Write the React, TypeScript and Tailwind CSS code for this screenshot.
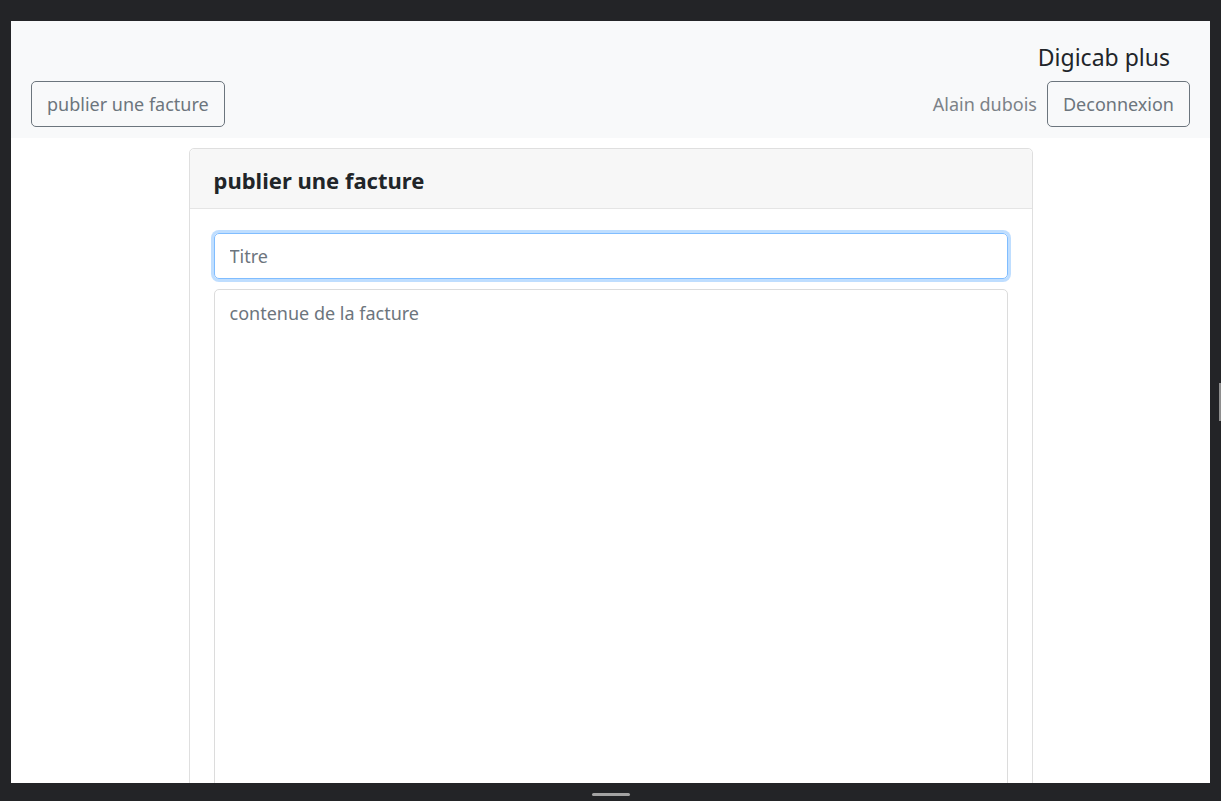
import React, { useState } from "react";

const font = { fontFamily: '"Noto Sans", "Open Sans", Arial, sans-serif' };

const App: React.FC = () => {
  const [titre, setTitre] = useState<string>("");
  const [contenu, setContenu] = useState<string>("");

  return (
    <div
      className="relative h-[801px] w-[1221px] bg-[#232427] pt-[21px] pl-[11px] pr-[11px] flex flex-col overflow-hidden"
      style={font}
    >
      <div className="h-[762px] bg-white overflow-hidden">
        {/* navbar */}
        <nav className="bg-[#f8f9fa] h-[117px] px-[20px] pt-[18px] flex flex-col">
          <div className="h-[36px] flex justify-end pr-[20px]">
            <span className="text-[23px] leading-[36px] text-[#212529]">Digicab plus</span>
          </div>
          <div className="mt-[6px] flex items-center justify-between">
            <button className="h-[46px] px-[15px] rounded-[5px] border border-[#6c757d] text-[#6c757d] text-[18px] leading-none">
              publier une facture
            </button>
            <div className="flex items-center gap-[10px]">
              <span className="text-[18px] text-[#7c8288]">Alain dubois</span>
              <button className="h-[46px] px-[15px] rounded-[5px] border border-[#6c757d] text-[#6c757d] text-[18px] leading-none">
                Deconnexion
              </button>
            </div>
          </div>
        </nav>

        {/* carte */}
        <div className="mt-[10px] mx-auto w-[844px] border border-[#dfdfdf] rounded-[5px]">
          <div className="h-[60px] bg-[#f7f7f7] border-b border-[#e5e5e5] px-[24px] pt-[3px] flex items-center rounded-t-[5px]">
            <h5 className="text-[22px] font-bold text-[#212529]">publier une facture</h5>
          </div>
          <div className="px-[24px] pt-[24px] pb-[24px]">
            <input
              type="text"
              placeholder="Titre"
              value={titre}
              onChange={(e) => setTitre(e.target.value)}
              className="w-full h-[46px] px-[15px] text-[18px] rounded-[5px] border border-[#80bdff] shadow-[0_0_0_3px_rgba(0,123,255,0.25)] outline-none placeholder:text-[#6c757d]"
              style={font}
            />
            <textarea
              placeholder="contenue de la facture"
              value={contenu}
              onChange={(e) => setContenu(e.target.value)}
              className="mt-[10px] w-full h-[600px] px-[15px] py-[10px] text-[18px] rounded-[5px] border border-[#dcdcdc] outline-none resize-none placeholder:text-[#6c757d]"
              style={font}
            />
          </div>
        </div>
      </div>

      {/* bas de fenetre */}
      <div className="flex-1 flex items-center justify-center pt-[4px]">
        <div className="w-[38px] h-[3px] rounded-sm bg-[#a3a3a3]" />
      </div>
      <div className="absolute right-0 top-[383px] w-[2px] h-[38px] bg-[#8e8e8e]" />
    </div>
  );
};

export default App;
